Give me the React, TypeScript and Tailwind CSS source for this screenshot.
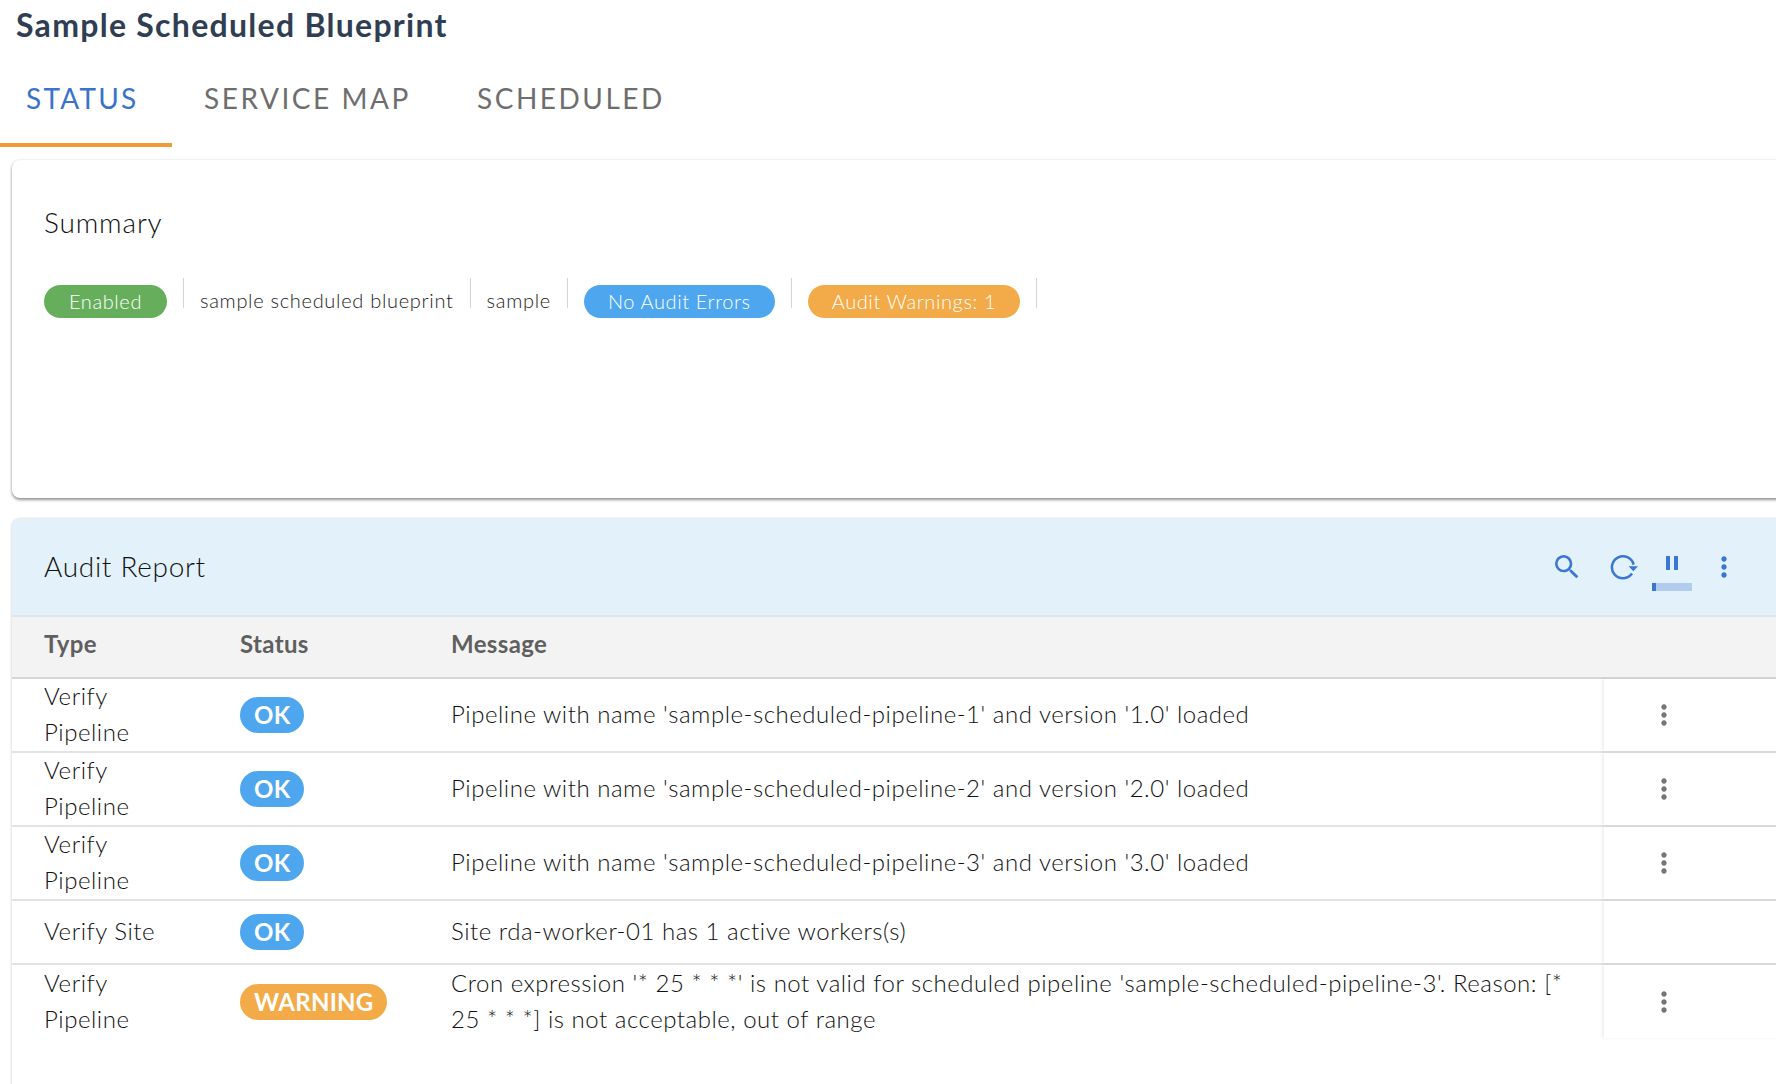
import { MdMoreVert, MdPause, MdSearch } from 'react-icons/md';

const font = "font-['Lato',sans-serif]";

type Row = { type: string; status: 'OK' | 'WARNING'; message: string; menu: boolean };

const rows: Row[] = [
  { type: 'Verify Pipeline', status: 'OK', message: "Pipeline with name 'sample-scheduled-pipeline-1' and version '1.0' loaded", menu: true },
  { type: 'Verify Pipeline', status: 'OK', message: "Pipeline with name 'sample-scheduled-pipeline-2' and version '2.0' loaded", menu: true },
  { type: 'Verify Pipeline', status: 'OK', message: "Pipeline with name 'sample-scheduled-pipeline-3' and version '3.0' loaded", menu: true },
  { type: 'Verify Site', status: 'OK', message: 'Site rda-worker-01 has 1 active workers(s)', menu: false },
  {
    type: 'Verify Pipeline',
    status: 'WARNING',
    message:
      "Cron expression '* 25 * * *' is not valid for scheduled pipeline 'sample-scheduled-pipeline-3'. Reason: [* 25 * * *] is not acceptable, out of range",
    menu: true,
  },
];

function Sep() {
  return <div className="mx-4 mb-[10px] h-[30px] w-px self-start bg-[#d4d4d4]" />;
}

function Pill({ label, color }: { label: string; color: string }) {
  return (
    <span
      className={
        'flex h-[33px] min-w-[123px] items-center justify-center rounded-full px-6 pb-[2px] text-[20px] font-light tracking-[0.03em] text-white ' +
        color
      }
    >
      {label}
    </span>
  );
}

function RefreshIcon() {
  return (
    <svg width="28" height="28" viewBox="0 0 28 28" fill="none" aria-hidden>
      <path d="M23.6 12.6A11 11 0 1 0 22 21.5" stroke="#3a76d2" strokeWidth="2.5" />
      <path d="M18.6 14.2h9.4l-4.7 5z" fill="#3a76d2" />
    </svg>
  );
}

function StatusBadge({ status }: { status: Row['status'] }) {
  return (
    <span
      className={
        'flex h-9 items-center rounded-full px-[14px] text-[24px] font-bold tracking-[0.01em] text-white ' +
        (status === 'OK' ? 'bg-[#4da6ee]' : 'bg-[#f3ab49]')
      }
    >
      {status}
    </span>
  );
}

export default function App() {
  return (
    <div className={'h-[1084px] w-[1776px] overflow-hidden bg-white ' + font}>
      <h1 className="h-[52px] pl-4 text-[32px] leading-[50px] font-bold tracking-[0.04em] text-[#2f3e52]">
        Sample Scheduled Blueprint
      </h1>

      {/* Tabs */}
      <div className="flex h-[95px] items-start text-[28px] tracking-[0.09em] text-[#6e6e6e]">
        <div className="h-[95px] w-[172px] border-b-4 border-[#f29a38] pt-[30px] pl-[26px] leading-[32px] tracking-[0.08em] text-[#3a73cb]">
          STATUS
        </div>
        <div className="w-[305px] pt-[30px] pl-[32px] leading-[32px]">SERVICE MAP</div>
        <div className="pt-[30px] leading-[32px]">SCHEDULED</div>
      </div>

      {/* Summary */}
      <section className="mt-[13px] mr-[-20px] ml-3 h-[338px] rounded-lg bg-white pt-[45px] pl-8 shadow-[0_2px_3px_rgba(0,0,0,0.4),0_0_3px_rgba(0,0,0,0.12)]">
        <h2 className="text-[28px] leading-[34px] font-light tracking-[0.03em] text-[#111]">Summary</h2>
        <div className="mt-[39px] flex items-end text-[20px] font-light tracking-[0.035em] text-[#222]">
          <Pill label="Enabled" color="bg-[#66ae5c]" />
          <Sep />
          <span className="flex h-[33px] items-center pb-1">sample scheduled blueprint</span>
          <Sep />
          <span className="flex h-[33px] items-center pb-1">sample</span>
          <Sep />
          <Pill label="No Audit Errors" color="bg-[#4da6ee]" />
          <Sep />
          <Pill label="Audit Warnings: 1" color="bg-[#f3ab49]" />
          <Sep />
        </div>
      </section>

      {/* Audit report */}
      <section className="mt-[21px] mr-[-20px] ml-3 h-[600px] rounded-t-lg bg-white shadow-[0_0_3px_rgba(0,0,0,0.25)]">
        <div className="flex h-[98px] items-center justify-between rounded-t-lg border-b-2 border-[#dde4ea] bg-[#e3f1fb] pl-8">
          <h2 className="pb-[2px] text-[28px] font-light tracking-[0.025em] text-[#111]">Audit Report</h2>
          <div className="relative mr-[57px] flex w-[188px] items-center text-[#3a76d2]">
            <MdSearch size={32} className="absolute left-0" />
            <div className="absolute top-[-15px] left-[59px]">
              <RefreshIcon />
            </div>
            <div className="absolute top-[-16px] left-[101px] flex w-10 flex-col items-center">
              <MdPause size={24} />
              <div className="mt-2 h-2 w-10 bg-[#b2cced]">
                <div className="h-2 w-1 bg-[#3a76d2]" />
              </div>
            </div>
            <MdMoreVert size={32} className="absolute left-[157px]" />
          </div>
        </div>

        <div className="grid h-[62px] grid-cols-[196px_211px_1fr] items-center border-b-2 border-[#d6d6d6] bg-[#f3f3f3] pb-[6px] pl-8 text-[24px] font-bold tracking-[0.015em] text-[#5f5f5f]">
          <span>Type</span>
          <span>Status</span>
          <span>Message</span>
        </div>

        {rows.map((row, i) => (
          <div
            key={i}
            className={
              'grid grid-cols-[228px_211px_1fr_192px] items-center text-[24px] leading-9 font-light tracking-[0.022em] text-[#111] ' +
              (i === 3 ? 'h-16 ' : i === 4 ? 'h-[73px] ' : 'h-[74px] ') +
              (i < 4 ? 'border-b-2 border-[#e2e2e2]' : '')
            }
          >
            <div className="w-[152px] -translate-y-px pl-8">{row.type}</div>
            <div className="flex">
              <StatusBadge status={row.status} />
            </div>
            <div className="-translate-y-px pr-9">{row.message}</div>
            <div className="flex h-full items-center bg-white pl-[44px] text-[#757575] shadow-[-2px_0_3px_rgba(0,0,0,0.07)]">
              {row.menu && <MdMoreVert size={32} />}
            </div>
          </div>
        ))}
      </section>
    </div>
  );
}
